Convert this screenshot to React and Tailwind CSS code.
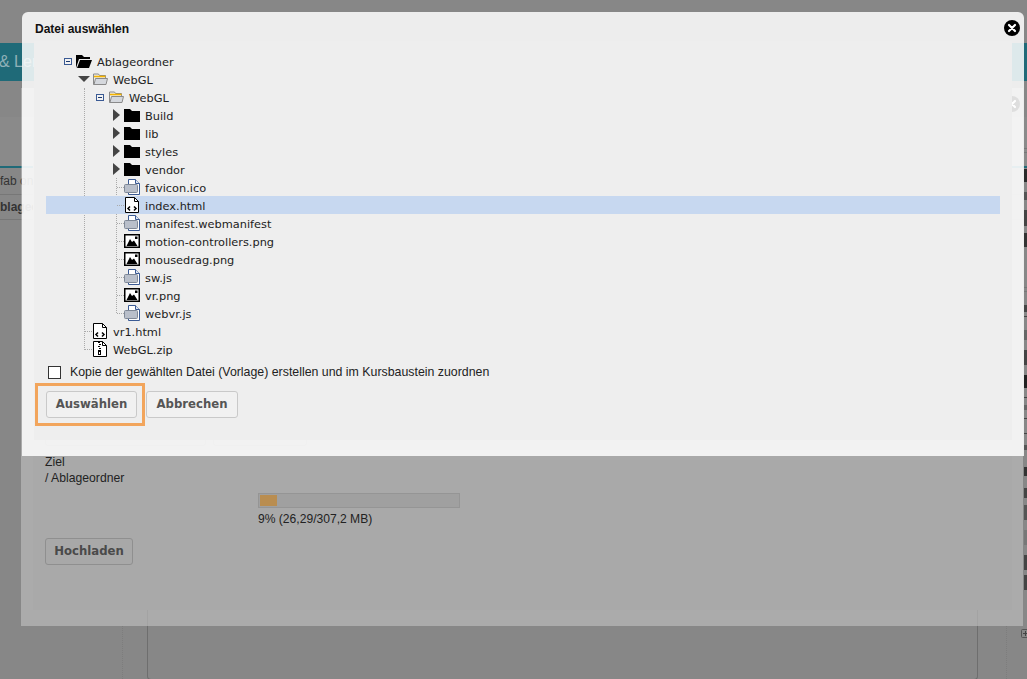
const tree = "font-['DejaVu_Sans',sans-serif]";

const Minus = () => (
  <svg width="8" height="7" viewBox="0 0 8 7"><rect x="0.5" y="0.5" width="7" height="6" fill="#f2f2f2" stroke="#3a5a94" /><path d="M2 3.5h4" stroke="#1c3a70" /></svg>
);
const TriR = () => (
  <svg width="7" height="12" viewBox="0 0 7 12"><path d="M0 0l7 6-7 6z" fill="#444" /></svg>
);
const TriD = () => (
  <svg width="12" height="6" viewBox="0 0 12 6"><path d="M0 0h12L6 6z" fill="#444" /></svg>
);
const FolderClosed = () => (
  <svg width="16" height="13" viewBox="0 0 16 13"><path d="M0 0h6l2 2h8v11H0z" fill="#000" /></svg>
);
const FolderOpenBlack = () => (
  <svg width="16" height="13" viewBox="0 0 16 13"><path d="M0 0h6l2 2h6v2H3L0 13z" fill="#000" /><path d="M4 5h12l-3 8H1z" fill="#000" /></svg>
);
const FolderOpenYellow = () => (
  <svg width="15" height="12" viewBox="0 0 15 12">
    <path d="M0.5 11.5V1h5l1 1.5h6v9z" fill="#ededed" stroke="#8a8a8a" />
    <path d="M1 3.5h11.5" stroke="#f5b400" strokeWidth="1.6" />
    <path d="M1 11.5l1.5-6h12l-1.5 6z" fill="#d5d8dd" stroke="#8a8a8a" />
  </svg>
);
const FileGeneric = () => (
  <svg width="16" height="16" viewBox="0 0 16 16">
    <path d="M4.5 0.5h7l4 4v11h-11z" fill="#fff" stroke="#3a5a94" />
    <path d="M11.5 0.5v4h4" fill="#dfe6f2" stroke="#3a5a94" />
    <rect x="0.5" y="5.5" width="13" height="8" rx="1" fill="#b9bfca" stroke="#7f8896" />
  </svg>
);
const FileCode = () => (
  <svg width="14" height="16" viewBox="0 0 14 16">
    <path d="M0.5 0.5h9l4 4v11h-13z" fill="#fff" stroke="#000" />
    <path d="M9.5 0.5v4h4" fill="none" stroke="#000" />
    <path d="M5 9.5l-2 2 2 2M9 9.5l2 2-2 2" fill="none" stroke="#000" strokeWidth="1.5" />
  </svg>
);
const FileImage = () => (
  <svg width="16" height="14" viewBox="0 0 16 14">
    <rect x="0.75" y="0.75" width="14.5" height="12.5" fill="#fff" stroke="#000" strokeWidth="1.5" />
    <path d="M2.5 12L6 5l2 3 2-1.5 3.5 5.5z" fill="#000" />
    <rect x="11" y="2.5" width="2.5" height="2.5" fill="#000" />
  </svg>
);
const FileZip = () => (
  <svg width="14" height="16" viewBox="0 0 14 16">
    <path d="M0.5 0.5h9l4 4v11h-13z" fill="#fff" stroke="#000" />
    <path d="M9.5 0.5v4h4" fill="none" stroke="#000" />
    <path d="M5 1.5h2M6 3.5h2M5 5.5h2M6 7.5h2" stroke="#000" />
    <rect x="5" y="9" width="3" height="5" fill="#000" />
    <rect x="6" y="11" width="1" height="2" fill="#fff" />
  </svg>
);

const rows = [
  { pl: "pl-[14px]", t: <Minus />, i: <FolderOpenBlack />, n: "Ablageordner" },
  { pl: "pl-[30px]", t: <TriD />, i: <FolderOpenYellow />, n: "WebGL" },
  { pl: "pl-[46px]", t: <Minus />, i: <FolderOpenYellow />, n: "WebGL" },
  { pl: "pl-[62px]", t: <TriR />, i: <FolderClosed />, n: "Build" },
  { pl: "pl-[62px]", t: <TriR />, i: <FolderClosed />, n: "lib" },
  { pl: "pl-[62px]", t: <TriR />, i: <FolderClosed />, n: "styles" },
  { pl: "pl-[62px]", t: <TriR />, i: <FolderClosed />, n: "vendor" },
  { pl: "pl-[62px]", d: 1, i: <FileGeneric />, n: "favicon.ico" },
  { pl: "pl-[62px]", d: 1, i: <FileCode />, n: "index.html", sel: true },
  { pl: "pl-[62px]", d: 1, i: <FileGeneric />, n: "manifest.webmanifest" },
  { pl: "pl-[62px]", d: 1, i: <FileImage />, n: "motion-controllers.png" },
  { pl: "pl-[62px]", d: 1, i: <FileImage />, n: "mousedrag.png" },
  { pl: "pl-[62px]", d: 1, i: <FileGeneric />, n: "sw.js" },
  { pl: "pl-[62px]", d: 1, i: <FileImage />, n: "vr.png" },
  { pl: "pl-[62px]", d: 1, i: <FileGeneric />, n: "webvr.js" },
  { pl: "pl-[30px]", d: 1, i: <FileCode />, n: "vr1.html" },
  { pl: "pl-[30px]", d: 1, i: <FileZip />, n: "WebGL.zip" },
];

const Row = ({ r }) => (
  <div className={`flex h-[18px] items-center ${r.pl} ${r.sel ? "bg-[#c7d8f0]" : ""}`}>
    <div className="flex h-full w-[16px] shrink-0 items-center justify-center">
      {r.t}
      {r.d && <span className="ml-[9px] w-[7px] border-t border-dotted border-[#aaaaaa]" />}
    </div>
    <div className="flex w-[16px] shrink-0 items-center justify-center">{r.i}</div>
    <span className={`ml-[5px] self-start pt-[1px] text-[11.35px] leading-[18px] text-[#222222] ${tree}`}>{r.n}</span>
  </div>
);

const Btn = ({ children, className = "" }) => (
  <button className={`h-[27px] rounded-[3px] border border-[#c9c9c9] bg-[#f1f1f1] pt-[1px] text-[11.7px] font-bold text-[#555555] ${tree} ${className}`}>
    {children}
  </button>
);

const edge = [
  "mt-[148px] h-[1px] bg-[#777777]", "mt-[3px] h-[1px] bg-[#777777]", "mt-[16px] h-[13px] bg-[#2a2a2a]", "mt-[10px] h-[8px] bg-[#555555]",
  "mt-[10px] h-[16px] bg-[#444444]", "mt-[7px] h-[14px] bg-[#333333]", "mt-[40px] h-[1px] bg-[#777777]", "mt-[3px] h-[1px] bg-[#777777]",
  "mt-[13px] h-[7px] bg-[#444444]", "mt-[4px] h-[1px] bg-[#444444]", "mt-[13px] h-[10px] bg-[#666666]", "mt-[10px] h-[15px] bg-[#444444]",
  "mt-[10px] h-[13px] bg-[#222222]", "mt-[9px] h-[1px] bg-[#444444]", "mt-[7px] h-[5px] bg-[#666666]", "mt-[8px] h-[1px] bg-[#444444]",
  "mt-[14px] h-[1px] bg-[#444444]", "mt-[11px] h-[5px] bg-[#555555]", "mt-[17px] h-[9px] bg-[#333333]", "mt-[12px] h-[10px] bg-[#444444]",
  "mt-[7px] h-[15px] bg-[#555555]", "mt-[10px] h-[15px] bg-[#777777]", "mt-[10px] h-[15px] bg-[#444444]", "mt-[5px] h-[15px] bg-[#444444]",
];

export default function App() {
  return (
    <div className="relative h-[679px] w-[1027px] overflow-hidden bg-[#878787] font-['Liberation_Sans',sans-serif]">
      {/* Page behind the dialogs */}
      <div className="h-[43px]" />
      <div className="flex h-[38px] items-center bg-[#1f6a78] text-[16px] text-[#8fb1b8]">
        <span className="ml-[-1px]">&amp; Lernen</span>
      </div>
      <div className="h-[36px]" />
      <div className="h-[51px] border-b-[2px] border-[#1f6a78] bg-[#8a8a8a]" />
      <div className="flex h-[27px] items-center border-b border-[#777777] text-[12px] text-[#333333]">fab online</div>
      <div className="flex h-[25px] items-center border-b border-[#777777] text-[12px] font-bold text-[#333333]">blageordner</div>

      {/* Right edge of the page */}
      <div className="absolute left-[1024px] top-0 flex h-full w-[3px] flex-col">
        {edge.map((c, i) => <div key={i} className={c} />)}
      </div>
      <svg width="9" height="9" viewBox="0 0 9 9" className="absolute left-[1021px] top-[629px]">
        <rect x="0.5" y="0.5" width="10" height="8" rx="1" fill="none" stroke="#555" />
        <path d="M2 4.5h5M4.5 2v5" stroke="#444" />
      </svg>

      {/* Page columns visible under the dialogs */}
      <div className="absolute left-[122px] top-[626px] h-[53px] border-l border-dotted border-[#7d7d7d]" />
      <div className="absolute left-[147px] top-[626px] h-[54px] w-[831px] rounded-b-[4px] border-x border-b border-[#6e6e6e]" />
      <div className="absolute left-[1006px] top-[626px] h-[53px] border-l border-dotted border-[#7d7d7d]" />

      {/* Upload dialog, dimmed */}
      <div className="absolute left-[21px] top-[88px] h-[538px] w-[1002px] bg-[#ffffff]/30">
        <svg width="16" height="16" viewBox="0 0 16 16" className="absolute left-[983px] top-[8px]">
          <circle cx="8" cy="8" r="8" fill="#202020" />
          <path d="M5 5l6 6M11 5l-6 6" stroke="#fff" strokeWidth="2.2" strokeLinecap="round" />
        </svg>
        <div className="absolute left-[126px] top-[522px] h-[16px] border-l border-[#a3a3a3]" />
        <div className="absolute left-[956px] top-[522px] h-[16px] border-l border-[#a3a3a3]" />
        <div className="ml-[12px] mt-[32px] flex h-[490px] w-[979px] flex-col bg-[#a9a9a9] px-[12px] pt-[300px]">
          <div className="flex h-[26px] gap-[7px]">
            <div className="w-[161px] rounded-b-[3px] border border-[#999999]" />
            <div className="w-[94px] rounded-b-[3px] border border-[#999999]" />
          </div>
          <div className="mt-[8px] text-[12.2px] leading-[16px] text-[#222222]">Ziel</div>
          <div className="text-[12.2px] leading-[16px] text-[#222222]">/ Ablageordner</div>
          <div className="ml-[213px] mt-[7px] h-[15px] w-[202px] border border-[#959595] bg-[#a0a0a0] p-[1px]">
            <div className="h-full w-[17px] bg-[#b98d50]" />
          </div>
          <div className="ml-[213px] mt-[3px] text-[12.1px] leading-[16px] text-[#222222]">9% (26,29/307,2 MB)</div>
          <div className="mt-[11px]">
            <button className={`h-[27px] w-[88px] rounded-[3px] border border-[#8f8f8f] bg-[#a8a8a8] pt-[1px] text-[11.7px] font-bold text-[#4a4a4a] ${tree}`}>Hochladen</button>
          </div>
        </div>
      </div>

      {/* File selection dialog */}
      <div className="absolute left-[22px] top-[12px] h-[444px] w-[1002px] rounded-t-[6px] bg-[#ffffff]/85">
        <div className="flex h-[29px] items-center justify-between pl-[13px] pr-[4px] pt-[5px]">
          <span className="text-[12px] font-bold text-[#111111]">Datei auswählen</span>
          <svg width="16" height="16" viewBox="0 0 16 16" className="mt-[-3px]">
            <circle cx="8" cy="8" r="8" fill="#000" />
            <path d="M5 5l6 6M11 5l-6 6" stroke="#fff" strokeWidth="2.2" strokeLinecap="round" />
          </svg>
        </div>
        <div className="relative ml-[12px] h-[399px] w-[978px] bg-[#eeeeee] px-[12px] pt-[11px]">
          <div className="absolute left-[50px] top-[47px] h-[262px] border-l border-dotted border-[#aaaaaa]" />
          <div className="absolute left-[82px] top-[137px] h-[135px] border-l border-dotted border-[#aaaaaa]" />
          <div className="relative">
            {rows.map((r, i) => <Row key={i} r={r} />)}
          </div>
          <label className="mt-[7px] flex h-[14px] items-center text-[12.35px] text-[#222222]">
            <span className="ml-[2px] h-[13px] w-[13px] border border-[#333333] bg-white" />
            <span className="ml-[9px]">Kopie der gewählten Datei (Vorlage) erstellen und im Kursbaustein zuordnen</span>
          </label>
          <div className="mt-[12px] flex gap-[9px]">
            <div className="relative">
              <Btn className="w-[91px]">Auswählen</Btn>
              <span className="absolute left-[-11px] top-[-8px] h-[43px] w-[110px] border-[3px] border-[#f2a55c]" />
            </div>
            <Btn className="w-[92px]">Abbrechen</Btn>
          </div>
        </div>
      </div>
    </div>
  );
}
